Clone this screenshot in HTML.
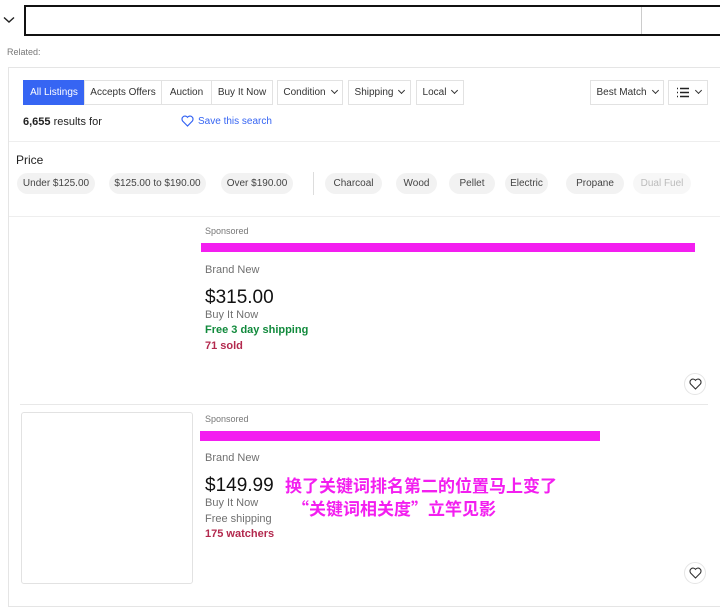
<!DOCTYPE html>
<html><head><meta charset="utf-8"><style>
*{margin:0;padding:0;box-sizing:border-box}
body{width:720px;height:591px;background:#fff;font-family:"Liberation Sans",Arial,sans-serif;position:relative;overflow:hidden;color:#333}
.a{position:absolute;white-space:nowrap}
.t{position:absolute;top:80px;height:25px;border:1px solid #e2e2e2;font-size:10px;line-height:24px;text-align:center;color:#333;background:#fff}
.c{position:absolute;top:173px;height:21px;border-radius:11px;background:#f2f2f2;font-size:10px;line-height:22px;text-align:center;color:#444}
.ch{display:inline-block;width:5px;height:5px;border-right:1.2px solid #333;border-bottom:1.2px solid #333;transform:rotate(45deg);margin-left:6px;position:relative;top:-2px}
.heart{position:absolute;width:22px;height:22px;border-radius:50%;border:1px solid #e5e5e5;background:#fff}
.g{color:#707070;font-size:11px}
.cn{font-size:17px;font-weight:bold;color:#f31ef0;font-family:'Noto Sans CJK SC',sans-serif}
</style></head><body>
<svg class="a" style="left:3px;top:16px" width="12" height="8"><path d="M1 1.5 L6 6 L11 1.5" fill="none" stroke="#222" stroke-width="1.4"/></svg>
<div class="a" style="left:24px;top:5px;width:700px;height:31px;border:2px solid #111"></div>
<div class="a" style="left:641px;top:7px;width:1px;height:27px;background:#ccc"></div>
<div class="a" style="left:7px;top:47px;font-size:9px;color:#777">Related:</div>
<div class="a" style="left:8px;top:67px;width:720px;height:540px;border:1px solid #e5e5e5"></div>
<div class="t" style="left:23px;width:62px;background:#3665f3;border-color:#3665f3;color:#fff">All Listings</div>
<div class="t" style="left:84px;width:78px">Accepts Offers</div>
<div class="t" style="left:161px;width:51px">Auction</div>
<div class="t" style="left:211px;width:62px">Buy It Now</div>
<div class="t" style="left:277px;width:66px">Condition<span class="ch"></span></div>
<div class="t" style="left:348px;width:63px">Shipping<span class="ch"></span></div>
<div class="t" style="left:416px;width:48px">Local<span class="ch"></span></div>
<div class="t" style="left:590px;width:74px">Best Match<span class="ch"></span></div>
<div class="t" style="left:668px;width:40px"><svg width="14" height="11" style="vertical-align:middle"><path d="M1 1.5h1M1 5.5h1M1 9.5h1M4 1.5h9M4 5.5h9M4 9.5h9" stroke="#222" stroke-width="1.4"/></svg><span class="ch"></span></div>
<div class="a" style="left:23px;top:116px;font-size:11px;color:#222"><b>6,655</b> results for</div>
<svg class="a" style="left:181px;top:115px" width="13" height="12"><path d="M6.5 11 L1.6 6 A2.7 2.7 0 0 1 6.5 2.3 A2.7 2.7 0 0 1 11.4 6 Z" fill="none" stroke="#3665f3" stroke-width="1.2"/></svg>
<div class="a" style="left:198px;top:116px;font-size:10px;color:#3665f3">Save this search</div>
<div class="a" style="left:9px;top:141px;width:711px;height:1px;background:#eee"></div>
<div class="a" style="left:16px;top:153px;font-size:12px;color:#222">Price</div>
<div class="c" style="left:17px;width:78px">Under $125.00</div>
<div class="c" style="left:109px;width:97px">$125.00 to $190.00</div>
<div class="c" style="left:221px;width:72px">Over $190.00</div>
<div class="a" style="left:313px;top:172px;width:1px;height:23px;background:#ddd"></div>
<div class="c" style="left:325px;width:57px">Charcoal</div>
<div class="c" style="left:396px;width:41px">Wood</div>
<div class="c" style="left:449px;width:46px">Pellet</div>
<div class="c" style="left:505px;width:43px">Electric</div>
<div class="c" style="left:566px;width:58px">Propane</div>
<div class="c" style="left:633px;width:58px;color:#bbb;background:#f7f7f7">Dual Fuel</div>
<div class="a" style="left:9px;top:216px;width:711px;height:1px;background:#eee"></div>
<div class="a" style="left:205px;top:226px;font-size:9px;color:#777">Sponsored</div>
<div class="a" style="left:201px;top:243px;width:494px;height:9px;background:#f31ef0"></div>
<div class="a g" style="left:205px;top:264px">Brand New</div>
<div class="a" style="left:205px;top:287px;font-size:19px;color:#111">$315.00</div>
<div class="a g" style="left:205px;top:309px">Buy It Now</div>
<div class="a" style="left:205px;top:324px;font-size:11px;color:#118a3c;font-weight:bold">Free 3 day shipping</div>
<div class="a" style="left:205px;top:340px;font-size:11px;color:#b3294e;font-weight:bold">71 sold</div>
<div class="heart" style="left:684px;top:373px"></div>
<svg class="a" style="left:689px;top:378px" width="13" height="12"><path d="M6.5 11 L1.6 6 A2.7 2.7 0 0 1 6.5 2.3 A2.7 2.7 0 0 1 11.4 6 Z" fill="none" stroke="#333" stroke-width="1.1"/></svg>
<div class="a" style="left:20px;top:404px;width:688px;height:1px;background:#e8e8e8"></div>
<div class="a" style="left:21px;top:412px;width:172px;height:172px;border:1px solid #e2e2e2;border-radius:3px"></div>
<div class="a" style="left:205px;top:414px;font-size:9px;color:#777">Sponsored</div>
<div class="a" style="left:200px;top:431px;width:400px;height:10px;background:#f31ef0"></div>
<div class="a g" style="left:205px;top:452px">Brand New</div>
<div class="a" style="left:205px;top:475px;font-size:19px;color:#111">$149.99</div>
<div class="a cn" style="left:285px;top:472px">换了关键词排名第二的位置马上变了</div>
<div class="a cn" style="left:292px;top:495px">“关键词相关度”立竿见影</div>
<div class="a g" style="left:205px;top:497px">Buy It Now</div>
<div class="a g" style="left:205px;top:513px">Free shipping</div>
<div class="a" style="left:205px;top:528px;font-size:11px;color:#b3294e;font-weight:bold">175 watchers</div>
<div class="heart" style="left:684px;top:562px"></div>
<svg class="a" style="left:689px;top:567px" width="13" height="12"><path d="M6.5 11 L1.6 6 A2.7 2.7 0 0 1 6.5 2.3 A2.7 2.7 0 0 1 11.4 6 Z" fill="none" stroke="#333" stroke-width="1.1"/></svg>
</body></html>
